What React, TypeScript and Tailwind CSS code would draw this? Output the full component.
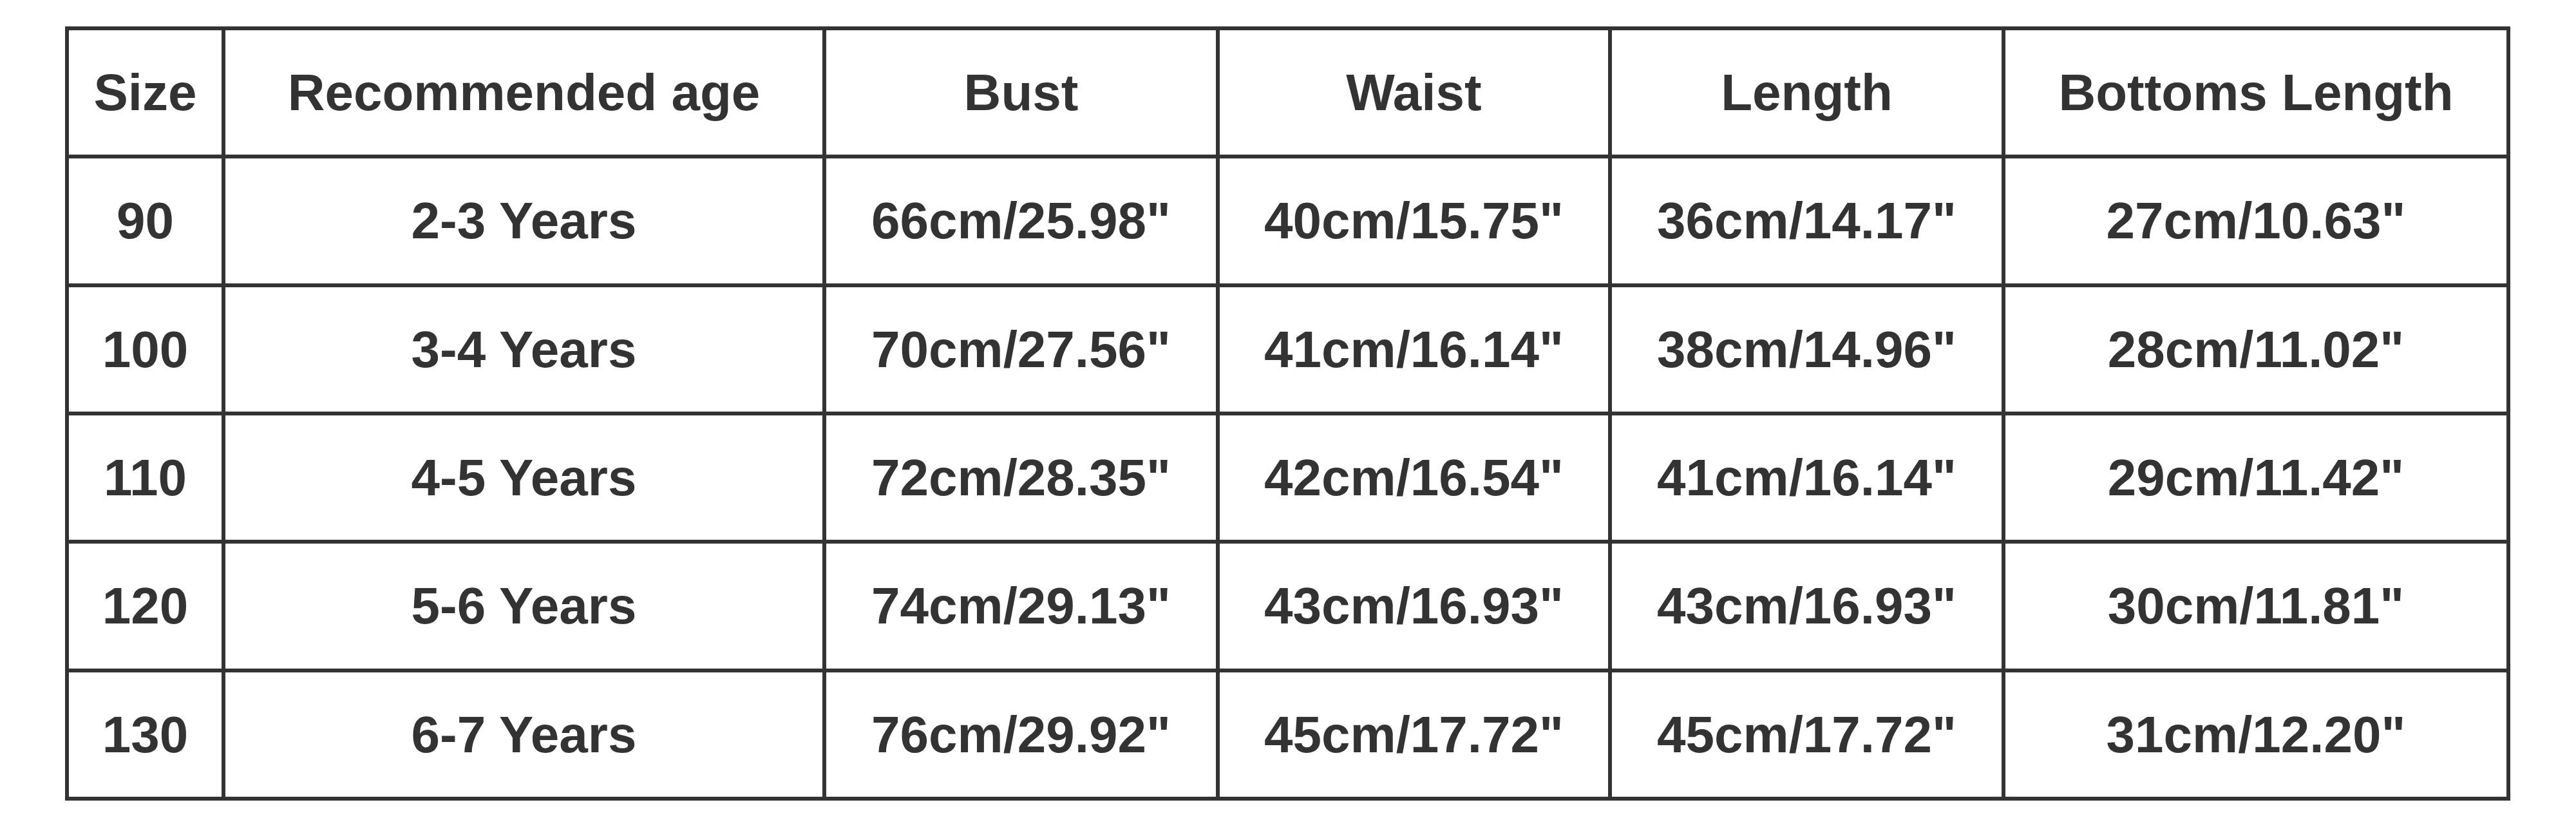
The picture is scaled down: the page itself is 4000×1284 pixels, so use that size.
const headers = ['Size', 'Recommended age', 'Bust', 'Waist', 'Length', 'Bottoms Length'];

const rows: string[][] = [
  ['90', '2-3 Years', '66cm/25.98"', '40cm/15.75"', '36cm/14.17"', '27cm/10.63"'],
  ['100', '3-4 Years', '70cm/27.56"', '41cm/16.14"', '38cm/14.96"', '28cm/11.02"'],
  ['110', '4-5 Years', '72cm/28.35"', '42cm/16.54"', '41cm/16.14"', '29cm/11.42"'],
  ['120', '5-6 Years', '74cm/29.13"', '43cm/16.93"', '43cm/16.93"', '30cm/11.81"'],
  ['130', '6-7 Years', '76cm/29.92"', '45cm/17.72"', '45cm/17.72"', '31cm/12.20"'],
];

function Cell({ children }: { children: React.ReactNode }) {
  return (
    <div className="flex items-center justify-center border-r-[6px] border-b-[6px] border-[#333333] whitespace-nowrap">
      {children}
    </div>
  );
}

export default function App() {
  return (
    <div className="h-[1284px] w-[4000px] bg-white pt-[41px] pl-[101px] font-['Liberation_Sans',Arial,sans-serif] text-[80px] font-bold leading-none text-[#333333]">
      <div className="grid w-fit grid-cols-[243px_933px_611px_609px_611px_784px] grid-rows-[199px_200px_199px_199px_200px_199px] border-t-[6px] border-l-[6px] border-[#333333]">
        {headers.map((h) => (
          <Cell key={h}>{h}</Cell>
        ))}
        {rows.map((row) =>
          row.map((value, i) => <Cell key={row[0] + '-' + i}>{value}</Cell>)
        )}
      </div>
    </div>
  );
}
